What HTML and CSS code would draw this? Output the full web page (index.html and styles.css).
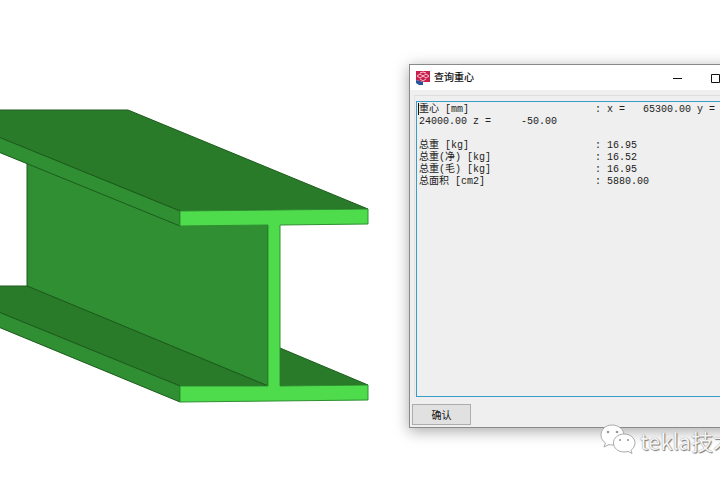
FILE: index.html
```html
<!DOCTYPE html>
<html lang="zh-CN">
<head>
    <meta charset="UTF-8">
    <meta name="viewport" content="width=device-width, initial-scale=1.0">
    <title>查询重心</title>
    <link rel="stylesheet" href="styles.css">
</head>
<body>
    <main class="workspace">
        <div class="model">
            <svg class="beam" viewBox="0 0 400 480" role="img" aria-label="H型钢">
                <polygon class="side" points="27,160 268,222 268,386 27,286"/>
                <polygon class="top" points="-4,110 128,110 368,209 180,211 -4,136"/>
                <polygon class="side" points="-4,136 180,211 180,226 -4,151"/>
                <polygon class="top" points="-4,286 27,286 268,386 180,386 -4,311"/>
                <polygon class="side" points="-4,311 180,386 180,402 -4,326"/>
                <polygon class="top" points="280,348 368,385 280,386"/>
                <polygon class="front" points="180,211 368,209 368,224 280,225 280,386 368,385 368,400 180,402 180,386 268,386 268,225 180,226"/>
            </svg>
        </div>

        <section class="window">
            <header class="title-bar">
                <svg class="app-icon" viewBox="0 0 14 14" aria-hidden="true">
                    <path fill="#c9214f" d="M0 0h14v11H7L0 9z"/>
                    <path fill="#27549b" d="M0 9l7 2v3H3L0 12z"/>
                    <path fill="none" stroke="#f6c3d3" d="M1 5l3-2 3 2 3-2 3 2-3 2-3-2-3 2zM4 8l3 2 3-2M4 2l3-1 3 1"/>
                </svg>
                <h1>查询重心</h1>
                <div class="window-buttons">
                    <button class="window-button" aria-label="最小化"><svg viewBox="0 0 10 10"><path d="M1 5.5h9"/></svg></button>
                    <button class="window-button" aria-label="最大化"><svg viewBox="0 0 10 10"><path d="M1.500 1.500h8v8h-8z"/></svg></button>
                    <button class="window-button" aria-label="关闭"><svg viewBox="0 0 10 10"><path d="M1 1l8 8M9 1l-8 8"/></svg></button>
                </div>
            </header>
            <div class="window-body">
                <div class="result-box">
                    <span class="caret"></span>
                    <textarea class="result" aria-label="查询结果" readonly spellcheck="false">重心 [mm]&#9;: x =   65300.00 y =
24000.00 z =     -50.00

总重 [kg]&#9;: 16.95
总重(净) [kg]&#9;: 16.52
总重(毛) [kg]&#9;: 16.95
总面积 [cm2]&#9;: 5880.00</textarea>
                </div>
            </div>
            <footer class="window-footer">
                <button class="confirm">确认</button>
            </footer>
        </section>

        <div class="watermark">
            <svg viewBox="0 0 36 32" aria-hidden="true">
                <path d="M12 1C5.500 1 1 5.500 1 11c0 3.500 1.800 6 4.500 8L4 23l5-2.500c1 .3 2 .5 3 .5 6.500 0 12-4.500 12-10S18.500 1 12 1z"/>
                <path d="M24 10c-6 0-10.500 4-10.500 9S18 28 24 28c1.500 0 2.500-.2 4-.6l4 2.100-1-3.300c2.300-1.700 4-4.200 4-7.200 0-5-5-9-11-9z"/>
                <g class="eyes">
                    <circle cx="8" cy="8" r="1.300"/>
                    <circle cx="17" cy="8" r="1.300"/>
                    <circle cx="20" cy="16" r="1.100"/>
                    <circle cx="28" cy="16" r="1.100"/>
                </g>
            </svg>
            <span>tekla技术</span>
        </div>
    </main>
</body>
</html>
```

FILE: styles.css
```css
body {
    margin: 0;
    background-color: #fff;
    font-family: "Liberation Sans", "Noto Sans CJK SC", sans-serif;
    color: #111;
}

button {
    font-family: inherit;
}

.workspace {
    position: relative;
    display: flex;
    align-items: flex-start;
    min-height: 100vh;
    overflow: hidden;
}

.model {
    flex: none;
    width: 400px;
}

.beam {
    display: block;
    width: 100%;
}

.beam polygon {
    stroke: #1c5c1d;
    stroke-width: 1;
}

.beam .top {
    fill: #2a7b29;
}

.beam .side {
    fill: #2f8f32;
}

.beam .front {
    fill: #4edb4c;
    stroke: #2f8f32;
}

.window {
    flex: none;
    display: flex;
    flex-direction: column;
    margin: 64px 0 0 9px;
    border: 1px solid #8a8a8a;
    background-color: #efefef;
    box-shadow: 0 3px 14px rgba(0, 0, 0, 0.35);
}

.title-bar {
    display: flex;
    align-items: center;
    height: 25px;
    padding-left: 6px;
    background-color: #fff;
}

.app-icon {
    width: 14px;
    height: 14px;
    margin-right: 4px;
}

.title-bar h1 {
    margin: 0;
    font-size: 10px;
    font-weight: 500;
    line-height: 14px;
}

.window-buttons {
    display: flex;
    margin-left: auto;
}

.window-button {
    display: flex;
    align-items: center;
    justify-content: center;
    width: 38px;
    height: 22px;
    padding: 0;
    border: none;
    background: none;
}

.window-button svg {
    width: 10px;
    height: 10px;
    fill: none;
    stroke: #111;
}

.window-body {
    margin: 5px 4px 0;
    padding: 5px 2px 0 1px;
    border-top: 1px solid #dedede;
    border-left: 1px solid #e2e2e2;
}

.result-box {
    position: relative;
}

.result {
    display: block;
    box-sizing: border-box;
    width: 350px;
    height: 296px;
    padding: 2px;
    border: 1px solid #3a9cc8;
    outline: none;
    resize: none;
    background-color: #efefef;
    color: #222;
    font-family: "Liberation Mono", "Noto Sans CJK SC", monospace;
    font-size: 10px;
    line-height: 12px;
    tab-size: 176px;
    white-space: pre;
    overflow: hidden;
}

.caret {
    position: absolute;
    top: 2px;
    left: 2px;
    width: 1px;
    height: 12px;
    background-color: #111;
}

.window-footer {
    padding: 7px 2px 2px;
}

.confirm {
    display: block;
    width: 59px;
    height: 21px;
    padding: 0;
    border: 1px solid #adadad;
    background-color: #e1e1e1;
    color: #111;
    font-size: 10px;
}

.watermark {
    position: absolute;
    top: 423px;
    left: 600px;
    display: flex;
    align-items: center;
    gap: 4px;
    color: #f4f4f4;
    font-family: "Noto Sans CJK SC", sans-serif;
    font-size: 22px;
    line-height: 34px;
    white-space: nowrap;
    text-shadow: 1px 1px 1px #777, 0 0 1px #888;
}

.watermark svg {
    width: 36px;
    height: 32px;
    fill: #fff;
    stroke: #aaa;
    stroke-width: 1;
}

.watermark .eyes {
    fill: #999;
    stroke: none;
}
```
